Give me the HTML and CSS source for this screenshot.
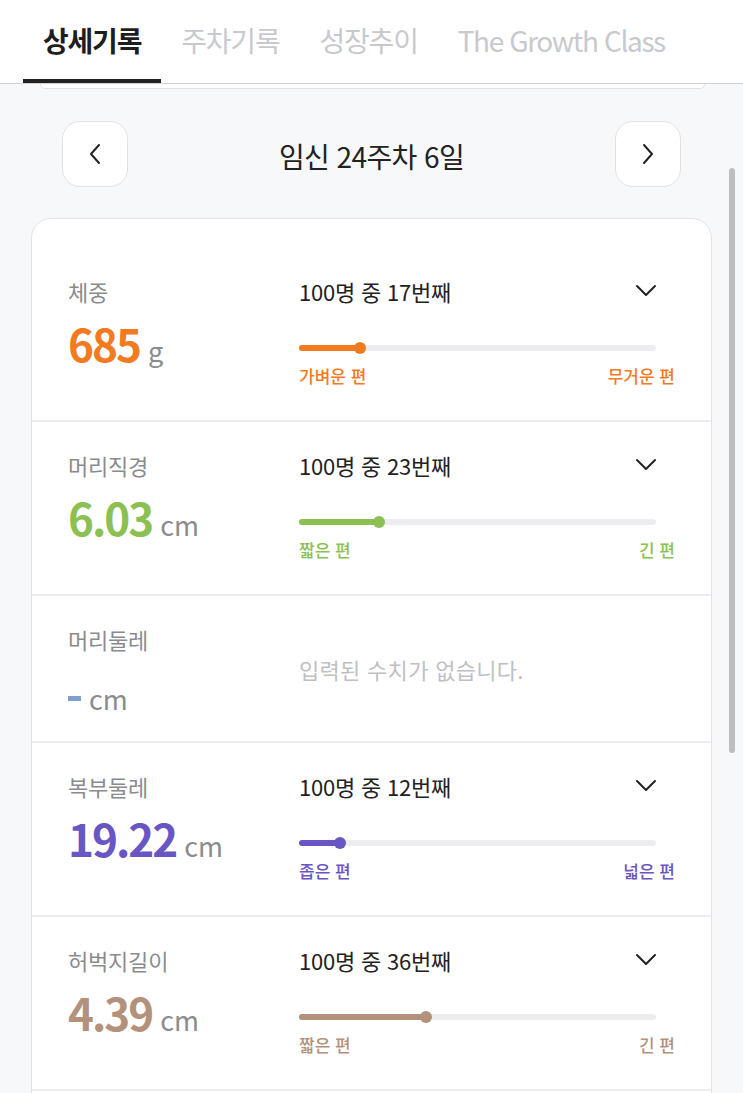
FILE: index.html
```html
<!doctype html>
<html lang="ko">
    <head>
        <title>상세기록</title>
        <meta http-equiv='Content-Type' content='text/html; charset=utf-8'>
        <meta name="viewport" content="width=device-width, initial-scale=1">
        <link rel="stylesheet" href="styles.css">
    </head>
    <body>
        <header class="tabs">
            <a class="tab active">상세기록</a>
            <a class="tab">주차기록</a>
            <a class="tab">성장추이</a>
            <a class="tab latin">The Growth Class</a>
        </header>

        <main class="content">
            <div class="prev-card"></div>

            <div class="week-nav">
                <button class="nav-btn" aria-label="이전 주">
                    <svg width="14" height="22" viewBox="0 0 14 22"><polyline points="11,2 3,11 11,20" /></svg>
                </button>
                <h2 class="week-title">임신 24주차 6일</h2>
                <button class="nav-btn" aria-label="다음 주">
                    <svg width="14" height="22" viewBox="0 0 14 22"><polyline points="3,2 11,11 3,20" /></svg>
                </button>
            </div>

            <section class="stats-card">
                <div class="stat-row orange">
                    <div class="stat-main">
                        <div class="stat-label">체중</div>
                        <div class="stat-value"><b>685</b><span>g</span></div>
                    </div>
                    <div class="stat-detail">
                        <div class="rank-line">
                            <span>100명 중 17번째</span>
                            <svg class="chevron" width="22" height="14" viewBox="0 0 22 14"><polyline points="2,2 11,11 20,2" /></svg>
                        </div>
                        <div class="track"><div class="fill" style="width: 17%"></div></div>
                        <div class="track-labels"><span>가벼운 편</span><span>무거운 편</span></div>
                    </div>
                </div>

                <div class="stat-row green">
                    <div class="stat-main">
                        <div class="stat-label">머리직경</div>
                        <div class="stat-value"><b>6.03</b><span>cm</span></div>
                    </div>
                    <div class="stat-detail">
                        <div class="rank-line">
                            <span>100명 중 23번째</span>
                            <svg class="chevron" width="22" height="14" viewBox="0 0 22 14"><polyline points="2,2 11,11 20,2" /></svg>
                        </div>
                        <div class="track"><div class="fill" style="width: 22.5%"></div></div>
                        <div class="track-labels"><span>짧은 편</span><span>긴 편</span></div>
                    </div>
                </div>

                <div class="stat-row blue">
                    <div class="stat-main">
                        <div class="stat-label">머리둘레</div>
                        <div class="stat-value"><b class="empty"><i class="dash"></i></b><span>cm</span></div>
                    </div>
                    <div class="stat-empty">입력된 수치가 없습니다.</div>
                </div>

                <div class="stat-row purple">
                    <div class="stat-main">
                        <div class="stat-label">복부둘레</div>
                        <div class="stat-value"><b>19.22</b><span>cm</span></div>
                    </div>
                    <div class="stat-detail">
                        <div class="rank-line">
                            <span>100명 중 12번째</span>
                            <svg class="chevron" width="22" height="14" viewBox="0 0 22 14"><polyline points="2,2 11,11 20,2" /></svg>
                        </div>
                        <div class="track"><div class="fill" style="width: 11.5%"></div></div>
                        <div class="track-labels"><span>좁은 편</span><span>넓은 편</span></div>
                    </div>
                </div>

                <div class="stat-row brown">
                    <div class="stat-main">
                        <div class="stat-label">허벅지길이</div>
                        <div class="stat-value"><b>4.39</b><span>cm</span></div>
                    </div>
                    <div class="stat-detail">
                        <div class="rank-line">
                            <span>100명 중 36번째</span>
                            <svg class="chevron" width="22" height="14" viewBox="0 0 22 14"><polyline points="2,2 11,11 20,2" /></svg>
                        </div>
                        <div class="track"><div class="fill" style="width: 35.5%"></div></div>
                        <div class="track-labels"><span>짧은 편</span><span>긴 편</span></div>
                    </div>
                </div>

                <div class="stat-row"></div>
            </section>
        </main>

        <div class="scrollbar"></div>
    </body>
</html>
```

FILE: styles.css
```css
html, body {
    height: 100%;
    overflow: hidden;
}
body {
    margin: 0;
    background: #f7f8fa;
    font-family: "Noto Sans CJK KR", "Noto Sans", sans-serif;
    color: #222;
}

/* top tabs */
.tabs {
    display: flex;
    height: 83px;
    padding-left: 23px;
    background: #fff;
    border-bottom: 1px solid #cfd0d4;
}
.tab {
    display: flex;
    align-items: center;
    padding: 0 20px 4px;
    font-size: 28px;
    letter-spacing: -1.2px;
    color: #c8c9ce;
    white-space: nowrap;
}
.tab.latin {
    letter-spacing: -1.4px;
}
.tab.active {
    color: #1e1e1e;
    font-weight: 700;
    border-bottom: 4px solid #222;
    padding-bottom: 0;
}

.content {
    padding: 0 31px;
}
.prev-card {
    height: 4px;
    margin: 0 7px 0 9px;
    background: #fff;
    border: 1px solid #e2e3e7;
    border-top: 0;
    border-radius: 0 0 16px 16px;
}

/* week navigation */
.week-nav {
    display: flex;
    align-items: center;
    justify-content: space-between;
    padding: 32px 31px 31px;
}
.nav-btn {
    width: 66px;
    height: 66px;
    display: flex;
    align-items: center;
    justify-content: center;
    background: #fff;
    border: 1px solid #e1e2e6;
    border-radius: 18px;
    padding: 0;
}
.nav-btn polyline, .chevron polyline {
    fill: none;
    stroke: #222;
    stroke-width: 2;
    stroke-linecap: round;
    stroke-linejoin: round;
}
.week-title {
    margin: 0;
    padding-top: 4px;
    font-size: 28px;
    font-weight: 400;
    letter-spacing: -0.6px;
}

/* stats card */
.stats-card {
    background: #fff;
    border: 1px solid #e2e3e7;
    border-radius: 20px;
    padding-top: 3px;
}
.stat-row {
    display: flex;
    padding: 28px 36px 25px;
    border-bottom: 2px solid #ecedf0;
}
.stat-row:first-child {
    padding-top: 54px;
}
.stat-main {
    width: 231px;
    flex-shrink: 0;
}
.stat-label {
    font-size: 22px;
    line-height: 30px;
    color: #8b8b8e;
    letter-spacing: -0.2px;
}
.stat-value {
    display: flex;
    align-items: baseline;
    height: 50px;
    margin-top: 12px;
    line-height: 50px;
    white-space: nowrap;
}
.stat-value b {
    font-size: 44px;
    font-weight: 700;
    letter-spacing: -2px;
}
.stat-value .dash {
    display: inline-block;
    width: 13px;
    height: 5px;
    vertical-align: 9px;
    background: #7e9fcf;
}
.stat-value span {
    margin-left: 8px;
    font-size: 27px;
    color: #8b8b8e;
}

.stat-detail {
    flex: 1;
    margin-bottom: 8px;
}
.rank-line {
    display: flex;
    align-items: center;
    justify-content: space-between;
    margin-right: 18px;
    font-size: 22px;
    line-height: 30px;
    letter-spacing: -0.2px;
}
.track {
    position: relative;
    height: 6px;
    margin: 39px 19px 0 0;
    border-radius: 3px;
    background: #ededef;
}
.fill {
    position: relative;
    height: 100%;
    border-radius: 3px;
}
.fill::after {
    content: "";
    position: absolute;
    right: -6px;
    top: -3px;
    width: 12px;
    height: 12px;
    border-radius: 50%;
    background: inherit;
}
.track-labels {
    display: flex;
    justify-content: space-between;
    margin-top: 14px;
    font-size: 17px;
    line-height: 22px;
    font-weight: 500;
    letter-spacing: 0;
}
.stat-empty {
    align-self: center;
    padding-bottom: 2px;
    font-size: 22px;
    color: #bfc0c4;
    letter-spacing: 0.3px;
}

.orange b, .orange .track-labels { color: #f37a1f; }
.orange .fill { background: #f37a1f; }
.green b, .green .track-labels { color: #8bc153; }
.green .fill { background: #8bc153; }
.purple b, .purple .track-labels { color: #6a56c2; }
.purple .fill { background: #6a56c2; }
.brown b, .brown .track-labels { color: #b3917a; }
.brown .fill { background: #b3917a; }

.scrollbar {
    position: fixed;
    left: 729px;
    top: 168px;
    width: 6px;
    height: 585px;
    border-radius: 3px;
    background: #bdbec2;
}
```
